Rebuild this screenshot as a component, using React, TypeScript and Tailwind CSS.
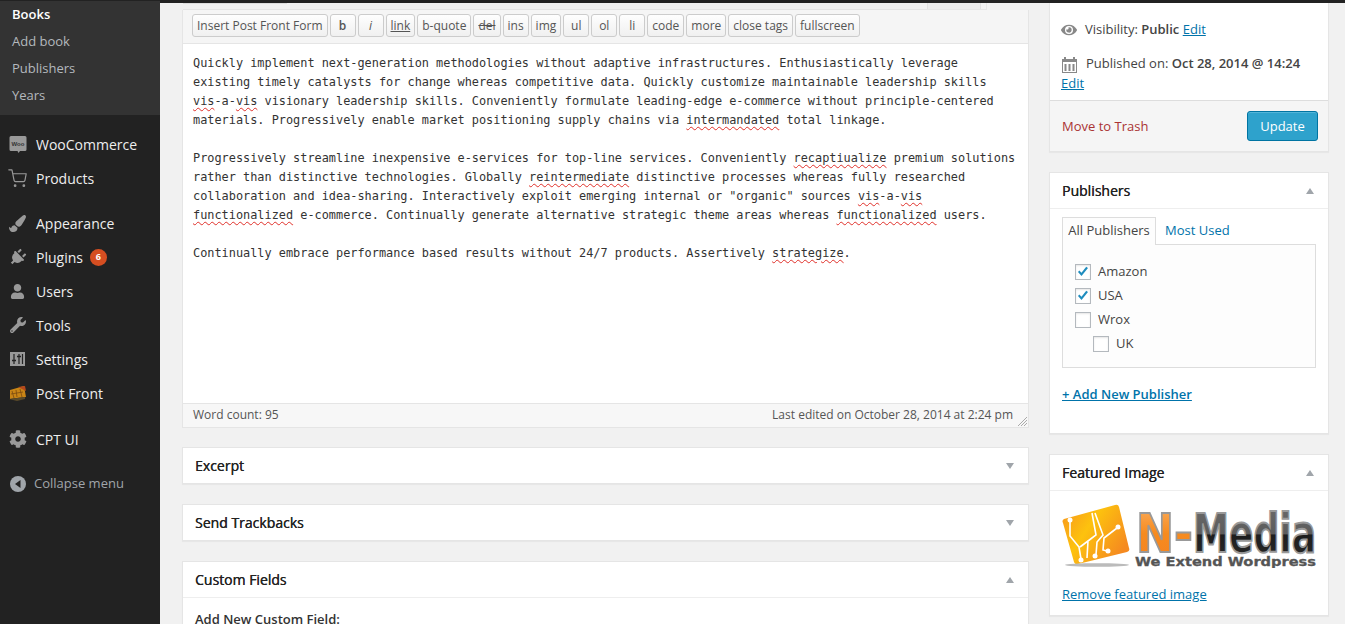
import React from "react";
import { FaEye, FaPlug, FaUser, FaWrench, FaCog, FaPaintBrush } from "react-icons/fa";
import { FiShoppingCart } from "react-icons/fi";

function WooIcon() {
  return (
    <svg width="18" height="19" viewBox="0 0 18 19">
      <path d="M2 1h14a1.500 1.500 0 0 1 1.500 1.500v12a1.500 1.500 0 0 1-1.500 1.500h-5l-1.500 2-1-2H2a1.500 1.500 0 0 1-1.500-1.500v-12A1.500 1.500 0 0 1 2 1z" fill="#999" />
      <text x="9" y="10.500" textAnchor="middle" fontSize="6" fontWeight="700" fill="#333" fontFamily="Liberation Sans, sans-serif">Woo</text>
    </svg>
  );
}

function SettingsIcon() {
  return (
    <svg width="15" height="14" viewBox="0 0 15 14">
      <rect width="15" height="14" fill="#999" />
      <path d="M4 2v10M9 2v10M12.500 2v10" stroke="#222" strokeWidth="1.200" />
      <path d="M2 8.500h4M7 4.500h4" stroke="#222" strokeWidth="1.500" />
    </svg>
  );
}

function PostFrontIcon() {
  return (
    <svg width="17" height="15" viewBox="0 0 17 15">
      <path d="M1 4l14-4 2 11-9 1-7 1z" fill="#c98516" />
      <path d="M3 5l2 7M7 4l1 7M11 3l2 8M2 8l12-2" stroke="#7a4a10" strokeWidth="0.800" fill="none" />
      <path d="M9 1l7-1 1 5z" fill="#b5481d" />
      <path d="M0 13l16-2v2l-8 2z" fill="#5a4a2a" />
    </svg>
  );
}

function CollapseIcon() {
  return (
    <svg width="16" height="16" viewBox="0 0 16 16">
      <circle cx="8" cy="8" r="8" fill="#a0a5aa" />
      <path d="M10.500 4v8L5 8z" fill="#222" />
    </svg>
  );
}

function CalendarIcon() {
  return (
    <svg width="17" height="17" viewBox="0 0 17 17">
      <path d="M1 3h15v14H1z" fill="#888" />
      <path d="M2 6h13v10H2z" fill="#fff" />
      <path d="M3 1h2v4H3zM12 1h2v4h-2z" fill="#888" />
      <path d="M3.500 8h2v7h-2zM7.500 8h2v7h-2zM11.500 8h2v7h-2z" fill="#888" />
    </svg>
  );
}

function NMediaLogo() {
  return (
    <svg width="255" height="64" viewBox="0 0 255 64">
      <defs>
        <linearGradient id="card" x1="0" y1="0" x2="1" y2="0.600">
          <stop offset="0" stopColor="#f7941e" />
          <stop offset="0.450" stopColor="#fdc20e" />
          <stop offset="1" stopColor="#f58a20" />
        </linearGradient>
        <linearGradient id="media" x1="0" y1="0" x2="0" y2="1">
          <stop offset="0" stopColor="#6b6b6b" />
          <stop offset="0.510" stopColor="#5c5c5c" />
          <stop offset="0.520" stopColor="#1e1e1e" />
          <stop offset="1" stopColor="#2a2a2a" />
        </linearGradient>
        <linearGradient id="n" x1="0" y1="0" x2="0" y2="1">
          <stop offset="0" stopColor="#fbb063" />
          <stop offset="0.500" stopColor="#f68b1f" />
          <stop offset="1" stopColor="#f58220" />
        </linearGradient>
      </defs>
      <path d="M2 15L53 1a3 3 0 0 1 4 2l10 41a3 3 0 0 1-2 4L16 60a3 3 0 0 1-4-2L1 19a3 3 0 0 1 1-4z" fill="url(#card)" />
      <path d="M8 16v16l9 11 2 12M30 9l4 22-8 6-1 17M33 9l8 22-6 7-1 13M55 24L42 34l-1 12 4 1M18 43l8-6" stroke="#fff" strokeWidth="1.600" fill="none" />
      <circle cx="8" cy="16" r="2.500" fill="#fff" />
      <circle cx="19" cy="56" r="2.500" fill="#fff" />
      <circle cx="33" cy="52" r="2.500" fill="#fff" />
      <circle cx="46" cy="47" r="2.500" fill="#fff" />
      <circle cx="56" cy="23" r="2.500" fill="#fff" />
      <ellipse cx="35" cy="61" rx="32" ry="1.800" fill="#bbb" />
      <text x="74" y="48" fontFamily="DejaVu Sans, sans-serif" fontWeight="700" fontSize="54" textLength="57" lengthAdjust="spacingAndGlyphs" fill="url(#n)" stroke="#999" strokeWidth="2">N-</text>
      <text x="131" y="48" fontFamily="DejaVu Sans, sans-serif" fontWeight="700" fontSize="54" textLength="123" lengthAdjust="spacingAndGlyphs" fill="url(#media)" stroke="#999" strokeWidth="2">Media</text>
      <text x="73" y="62" fontFamily="DejaVu Sans, sans-serif" fontWeight="700" fontSize="12" textLength="181" lengthAdjust="spacingAndGlyphs" fill="#555" stroke="#555" strokeWidth="0.300">We Extend Wordpress</text>
    </svg>
  );
}

function Sq({ children }: { children: React.ReactNode }) {
  return <span className="underline decoration-wavy decoration-[#e0302a] decoration-1 underline-offset-2">{children}</span>;
}

const menuGroups = [
  {
    spacing: "mb-[11px]",
    items: [
      { label: "WooCommerce", icon: <WooIcon /> },
      { label: "Products", icon: <FiShoppingCart size={19} color="#999" strokeWidth={1.5} /> },
    ],
  },
  {
    spacing: "mb-[12px]",
    items: [
      { label: "Appearance", icon: <FaPaintBrush size={17} color="#999" /> },
      { label: "Plugins", icon: <FaPlug size={17} color="#999" className="rotate-45" />, badge: "6" },
      { label: "Users", icon: <FaUser size={15} color="#999" /> },
      { label: "Tools", icon: <FaWrench size={16} color="#999" /> },
      { label: "Settings", icon: <SettingsIcon /> },
      { label: "Post Front", icon: <PostFrontIcon /> },
    ],
  },
  {
    spacing: "mb-[11px]",
    items: [{ label: "CPT UI", icon: <FaCog size={18} color="#999" /> }],
  },
];

const quicktags = ["Insert Post Front Form", "b", "i", "link", "b-quote", "del", "ins", "img", "ul", "ol", "li", "code", "more", "close tags", "fullscreen"];

function Sidebar() {
  return (
    <aside className="w-[160px] shrink-0 bg-[#222]">
      <div className="bg-[#333] h-[114px] pl-3 text-[13px] leading-[27px] text-[#b4b9be]">
        <div className="h-[27px] -mt-[2px] font-semibold text-white">Books</div>
        <div className="h-[27px]">Add book</div>
        <div className="h-[27px]">Publishers</div>
        <div className="h-[27px]">Years</div>
      </div>
      <div className="pt-[10px] mt-[2px]">
        {menuGroups.map((group, i) => (
          <div key={i} className={group.spacing}>
            {group.items.map((item) => (
              <div key={item.label} className="relative flex items-center h-[34px] text-[14px] text-[#eee]">
                <span className="w-[36px] shrink-0 flex justify-center pr-[1px]">{item.icon}</span>
                {item.label}
                {item.badge && (
                  <span className="ml-[7px] w-[17px] h-[17px] rounded-full bg-[#d54e21] text-white text-[9px] font-bold flex items-center justify-center">{item.badge}</span>
                )}
              </div>
            ))}
          </div>
        ))}
        <div className="flex items-center h-[34px] text-[13px] text-[#a0a5aa] pl-[10px] gap-[8px]">
          <CollapseIcon />
          Collapse menu
        </div>
      </div>
    </aside>
  );
}

function TabStrip() {
  return (
    <div className="h-[7px] w-[804px] border-b border-r border-[#e5e5e5] flex justify-between pr-[5px]">
      <div className="w-[104px] h-[1px] bg-[#ddd]" />
      <div className="w-[54px] bg-[#ebebeb] border-x border-[#e0e0e0]" />
    </div>
  );
}

function Toolbar() {
  return (
    <div className="h-[34px] bg-[#f5f5f5] border-b border-[#e5e5e5] pl-[9px] pt-[4px] flex gap-[2px]">
      {quicktags.map((tag) => (
        <button
          key={tag}
          className={`h-[23px] min-w-[26px] px-[4px] rounded-[3px] border border-[#ccc] bg-gradient-to-b from-[#fefefe] to-[#f0f0f0] text-[12px] leading-none text-[#555] ${tag === "link" ? "underline" : ""} ${tag === "del" ? "line-through" : ""} ${tag === "b" ? "font-semibold" : ""} ${tag === "i" ? "italic" : ""}`}
        >
          {tag}
        </button>
      ))}
    </div>
  );
}

function EditorText() {
  return (
    <div className="h-[359px] bg-white px-[10px] pt-[10px] font-['DejaVu_Sans_Mono',monospace] text-[11.88px] leading-[19px] text-[#333] whitespace-nowrap">
      <div>Quickly implement next-generation methodologies without adaptive infrastructures. Enthusiastically leverage</div>
      <div>existing timely catalysts for change whereas competitive data. Quickly customize maintainable leadership skills</div>
      <div><Sq>vis</Sq>-a-<Sq>vis</Sq> visionary leadership skills. Conveniently formulate leading-edge e-commerce without principle-centered</div>
      <div>materials. Progressively enable market positioning supply chains via <Sq>intermandated</Sq> total linkage.</div>
      <div className="h-[19px]" />
      <div>Progressively streamline inexpensive e-services for top-line services. Conveniently <Sq>recaptiualize</Sq> premium solutions</div>
      <div>rather than distinctive technologies. Globally <Sq>reintermediate</Sq> distinctive processes whereas fully researched</div>
      <div>collaboration and idea-sharing. Interactively exploit emerging internal or "organic" sources <Sq>vis</Sq>-a-<Sq>vis</Sq></div>
      <div><Sq>functionalized</Sq> e-commerce. Continually generate alternative strategic theme areas whereas <Sq>functionalized</Sq> users.</div>
      <div className="h-[19px]" />
      <div>Continually embrace performance based results without 24/7 products. Assertively <Sq>strategize</Sq>.</div>
    </div>
  );
}

function Arrow({ up }: { up?: boolean }) {
  return <span className={`w-0 h-0 border-x-[4px] border-x-transparent ${up ? "border-b-[6px] border-b-[#a0a5aa]" : "border-t-[6px] border-t-[#a0a5aa]"}`} />;
}

function BoxHeader({ title, up }: { title: string; up?: boolean }) {
  return (
    <div className="flex items-center justify-between text-[14px] text-[#222] pl-3 pr-[14px] h-[35px]">
      <span className="[text-shadow:0.3px_0_0_#222]">{title}</span>
      <Arrow up={up} />
    </div>
  );
}

function Box({ className = "", children }: { className?: string; children: React.ReactNode }) {
  return <div className={`bg-white border border-[#e5e5e5] shadow-[0_1px_1px_rgba(0,0,0,0.04)] ${className}`}>{children}</div>;
}

function Checkbox({ checked }: { checked?: boolean }) {
  return (
    <span className="w-[16px] h-[16px] border border-[#b4b9be] bg-white shadow-[inset_0_1px_2px_rgba(0,0,0,0.1)] flex items-center justify-center shrink-0">
      {checked && (
        <svg width="12" height="12" viewBox="0 0 12 12">
          <path d="M1 6l3.500 4 6.500-8-1.800-1.200-4.700 6-2.200-2.400z" fill="#1e8cbe" />
        </svg>
      )}
    </span>
  );
}

function PublisherRow({ label, checked, child }: { label: string; checked?: boolean; child?: boolean }) {
  return (
    <div className={`flex items-center h-[24px] gap-[7px] ${child ? "pl-[18px]" : ""}`}>
      <Checkbox checked={checked} />
      {label}
    </div>
  );
}

function RightColumn() {
  return (
    <div className="w-[280px] shrink-0 text-[13px] text-[#444]">
      <Box className="border-t-0">
        <div className="h-[97px] pl-[11px] pt-[17px]">
          <div className="flex items-center h-[20px] gap-[8px]">
            <FaEye size={16} color="#888" />
            <span>Visibility: <span className="font-semibold">Public</span> <a className="underline text-[#0073aa]">Edit</a></span>
          </div>
          <div className="flex items-center h-[20px] gap-[8px] mt-[14px]">
            <CalendarIcon />
            <span>Published on: <span className="font-semibold">Oct 28, 2014 @ 14:24</span></span>
          </div>
          <a className="underline text-[#0073aa] block leading-[19px]">Edit</a>
        </div>
        <div className="h-[51px] bg-[#f5f5f5] border-t border-[#ddd] flex items-center justify-between pl-[12px] pr-[10px]">
          <a className="text-[#a33] pt-[1px]">Move to Trash</a>
          <button className="w-[71px] h-[30px] pt-[1px] rounded-[3px] bg-[#2ea2cc] border border-[#0074a2] text-white text-[13px] shadow-[inset_0_1px_0_rgba(120,200,230,0.5)]">Update</button>
        </div>
      </Box>
      <Box className="mt-[20px] h-[262px]">
        <BoxHeader title="Publishers" up />
        <div className="border-t border-[#eee] px-[12px] pt-[8px]">
          <div className="flex h-[28px] relative z-10">
            <div className="h-[28px] w-[94px] pb-[2px] border border-[#ddd] border-b-0 bg-[#fdfdfd] flex items-center justify-center">All Publishers</div>
            <a className="ml-[9px] flex items-center text-[#0073aa] h-[27px]">Most Used</a>
          </div>
          <div className="-mt-px h-[124px] w-[254px] border border-[#ddd] bg-[#fdfdfd] pt-[15px] pl-[12px]">
            <PublisherRow label="Amazon" checked />
            <PublisherRow label="USA" checked />
            <PublisherRow label="Wrox" />
            <PublisherRow label="UK" child />
          </div>
          <a className="block mt-[17px] font-semibold underline text-[#0073aa]">+ Add New Publisher</a>
        </div>
      </Box>
      <Box className="mt-[20px] h-[162px]">
        <BoxHeader title="Featured Image" up />
        <div className="border-t border-[#eee] px-[12px] pt-[13px]">
          <NMediaLogo />
          <a className="block mt-[17px] underline text-[#0073aa]">Remove featured image</a>
        </div>
      </Box>
    </div>
  );
}

export default function App() {
  return (
    <div className="h-[624px] overflow-hidden bg-[#f1f1f1] font-['Open_Sans',sans-serif]">
      <div className="h-[3px] bg-[#222]" />
      <div className="flex">
        <Sidebar />
        <main className="flex-1 flex pl-[22px] pr-[16px] gap-[20px]">
          <div className="w-[847px] shrink-0">
            <div className="pl-px"><TabStrip /></div>
            <div className="border-x border-b border-[#e5e5e5]">
              <Toolbar />
              <EditorText />
              <div className="h-[24px] pb-[2px] bg-[#f7f7f7] border-t border-[#e5e5e5] flex items-center justify-between pl-[10px] pr-[15px] text-[12px] text-[#555] relative">
                <span>Word count: 95</span>
                <span>Last edited on October 28, 2014 at 2:24 pm</span>
                <svg width="10" height="10" viewBox="0 0 10 10" className="absolute right-[1px] bottom-[1px]">
                  <path d="M1 10l9-9M4 10l6-6M7 10l3-3" stroke="#aaa" strokeWidth="1" />
                </svg>
              </div>
            </div>
            <Box className="mt-[19px] h-[37px]"><BoxHeader title="Excerpt" /></Box>
            <Box className="mt-[20px] h-[37px]"><BoxHeader title="Send Trackbacks" /></Box>
            <Box className="mt-[20px] h-[120px]">
              <BoxHeader title="Custom Fields" up />
              <div className="border-t border-[#eee] pl-3 pt-[12px] text-[13px] font-semibold text-[#333]">Add New Custom Field:</div>
            </Box>
          </div>
          <RightColumn />
        </main>
      </div>
    </div>
  );
}
